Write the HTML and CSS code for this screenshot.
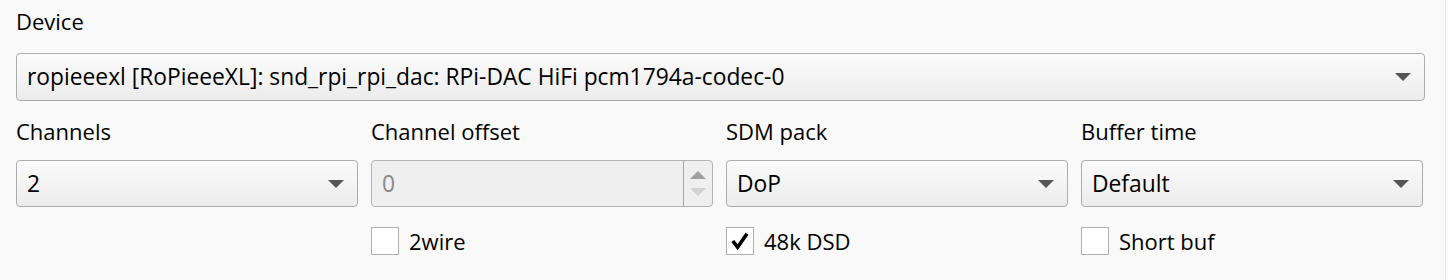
FILE: index.html
```html
<!DOCTYPE html>
<html>
<head>
<meta charset="utf-8">
<link rel="stylesheet" href="styles.css">
</head>
<body>
<div class="panel">
  <div class="label device-label">Device</div>
  <div class="select device-select">
    <span class="value">ropieeexl [RoPieeeXL]: snd_rpi_rpi_dac: RPi-DAC HiFi pcm1794a-codec-0</span>
    <span class="arrow"></span>
  </div>
  <div class="grid">
    <div class="col">
      <div class="label">Channels</div>
      <div class="select"><span class="value">2</span><span class="arrow"></span></div>
    </div>
    <div class="col">
      <div class="label">Channel offset</div>
      <div class="spinner">
        <span class="value">0</span>
        <span class="spin-buttons"><span class="up"></span><span class="down"></span></span>
      </div>
      <div class="check"><span class="box"></span><span class="check-label">2wire</span></div>
    </div>
    <div class="col">
      <div class="label">SDM pack</div>
      <div class="select"><span class="value">DoP</span><span class="arrow"></span></div>
      <div class="check"><span class="box">
        <svg width="18" height="18" viewBox="0 0 18 18"><path d="M1.8 9 L6.6 15.2 L16 1.8" fill="none" stroke="#000" stroke-width="3.6" stroke-linejoin="miter"/></svg>
      </span><span class="check-label">48k DSD</span></div>
    </div>
    <div class="col">
      <div class="label">Buffer time</div>
      <div class="select"><span class="value">Default</span><span class="arrow"></span></div>
      <div class="check"><span class="box"></span><span class="check-label">Short buf</span></div>
    </div>
  </div>
</div>
</body>
</html>
```
FILE: styles.css
```css
html {
  background: #fdfdfd;
}
body {
  margin: 0;
  font-family: "Open Sans", "Noto Sans", sans-serif;
  color: #000;
}
.panel {
  width: 1446px;
  height: 280px;
  box-sizing: border-box;
  background: #f9f9f9;
  border-right: 1px solid #e4e4e4;
  padding: 6px 0 0 16px;
}
.label {
  font-size: 22px;
  line-height: 30px;
  height: 30px;
  white-space: nowrap;
}
.select, .spinner {
  display: flex;
  align-items: center;
  box-sizing: border-box;
  height: 47px;
  border: 1px solid #acacac;
  border-radius: 4px;
  background: linear-gradient(#fbfbfb, #ececec);
  padding: 0 13px 0 10px;
  font-size: 22.8px;
  white-space: nowrap;
}
.device-select {
  width: 1409px;
  height: 48px;
  margin-top: 17px;
}
.value {
  flex: 1;
  line-height: 30px;
}
.arrow {
  width: 0;
  height: 0;
  border-left: 8px solid transparent;
  border-right: 8px solid transparent;
  border-top: 8px solid #555;
}
.grid {
  display: grid;
  grid-template-columns: repeat(4, 342px);
  column-gap: 13px;
  margin-top: 15px;
}
.col .select, .col .spinner {
  margin-top: 14px;
}
.spinner {
  background: #efefef;
  border-color: #b3b3b3;
  padding: 0 0 0 10px;
  color: #888;
}
.spin-buttons {
  display: flex;
  flex-direction: column;
  align-items: center;
  justify-content: center;
  gap: 9px;
  width: 28px;
  height: 100%;
  border-left: 1px solid #a6a6a6;
}
.up {
  width: 0; height: 0;
  border-left: 8px solid transparent;
  border-right: 8px solid transparent;
  border-bottom: 8px solid #a0a0a0;
}
.down {
  width: 0; height: 0;
  border-left: 8px solid transparent;
  border-right: 8px solid transparent;
  border-top: 8px solid #d2d2d2;
}
.check {
  display: flex;
  align-items: center;
  margin-top: 20px;
  height: 28px;
}
.box {
  display: flex;
  align-items: center;
  justify-content: center;
  box-sizing: border-box;
  width: 28px;
  height: 28px;
  border: 1px solid #b0b0b0;
  background: #fff;
}
.check-label {
  margin-left: 10px;
  font-size: 22px;
  line-height: 30px;
}
```
